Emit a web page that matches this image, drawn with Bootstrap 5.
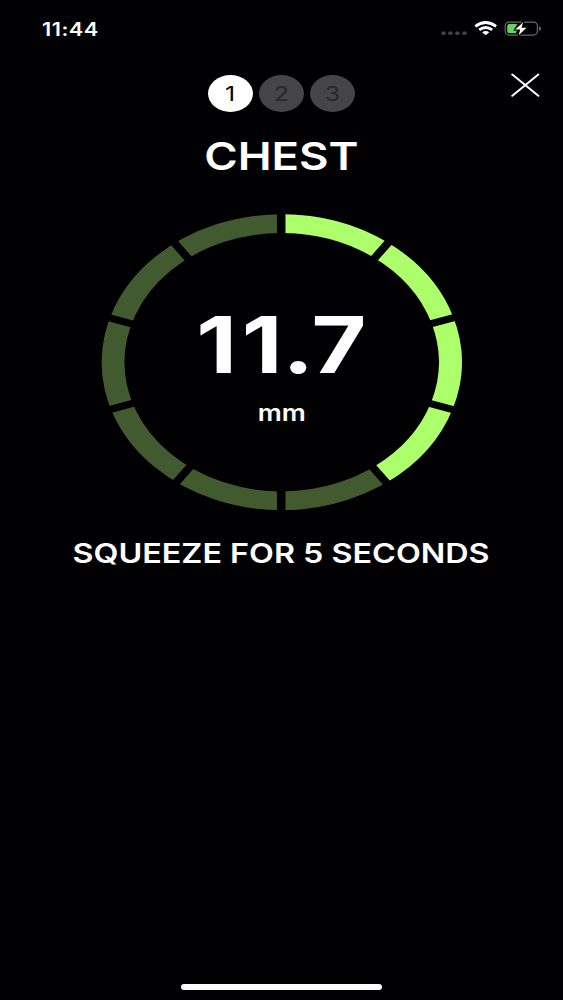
<!DOCTYPE html>
<html lang="en">
<head>
<meta charset="utf-8">
<meta name="viewport" content="width=device-width, initial-scale=1">
<title>Chest measurement</title>
<link href="https://cdn.jsdelivr.net/npm/bootstrap@5.3.0/dist/css/bootstrap.min.css" rel="stylesheet">
<style>
  html, body { height: 100%; }
  body { background: #010002; color: #fff; font-family: Inter, "Liberation Sans", sans-serif; }
  .screen { height: 1000px; width: 563px; overflow: hidden; }
  .wide { display: inline-block; transform: scaleX(1.21); white-space: nowrap; line-height: 1; }
  .statusbar { height: 57px; padding: 0 21px 0 42px; }
  .statusbar svg { margin-bottom: 2px; }
  .clock { font-size: 18px; font-weight: 600; letter-spacing: .4px; padding-top: 2px; transform-origin: left center; }
  .topbar { height: 75px; padding-top: 18px; }
  .step { width: 45px; height: 37px; border-radius: 50%; background: #454446; color: #29282a; font-size: 20.5px; padding-top: 2px; }
  .step.current { background: #fff; color: #000; }
  .steps { gap: 6px; }
  .btn-x { top: 73px; right: 23px; width: 29px; height: 24px; }
  .title { font-size: 38.5px; font-weight: 600; height: 48px; padding-top: 1px; }
  .title .wide { transform: scaleX(1.18); }
  .gauge { width: 362px; height: 300px; margin-top: 33px; }
  .gauge-text { padding-top: 93px; }
  .reading { font-size: 78px; font-weight: 700; height: 78px; }
  .reading .first { letter-spacing: 4px; }
  .unit { font-size: 23px; font-weight: 600; margin-top: 18px; }
  .unit.wide { transform: scaleX(1.16); }
  .prompt { font-size: 26.8px; font-weight: 600; margin-top: 20px; }
  .prompt .wide { transform: scaleX(1.205); }
  .home-bar { width: 201px; height: 6px; margin-bottom: 10px; }
</style>
</head>
<body>
<main class="screen d-flex flex-column align-items-center position-relative">
  <header class="statusbar w-100 d-flex justify-content-between align-items-center flex-shrink-0">
    <span class="wide clock">11:44</span>
    <svg width="104" height="20" viewBox="438 18 104 20" aria-hidden="true">
      <g fill="#434245"><ellipse cx="443.5" cy="33.2" rx="2.3" ry="1.9"/><ellipse cx="450.4" cy="33.2" rx="2.3" ry="1.9"/><ellipse cx="457.4" cy="33.2" rx="2.3" ry="1.9"/><ellipse cx="464.5" cy="33.2" rx="2.3" ry="1.9"/></g>
      <g fill="none" stroke="#fff" stroke-width="2.8">
        <path d="M475.3 26.3Q485.7 18.7 496.1 26.3"/>
        <path d="M479.2 29.9Q485.7 25 492.2 29.9"/>
      </g>
      <path fill="#fff" d="M482.1 32.3Q485.7 29.8 489.3 32.3L485.7 35.2Z"/>
      <rect x="505.2" y="22.1" width="32.2" height="13" rx="4" fill="none" stroke="#69686b" stroke-width="1.2"/>
      <path fill="#69686b" d="M539 26.2q2.2 .9 2.2 2.4t-2.2 2.4z"/>
      <path fill="#66d25f" d="M509.5 24H517.5L514 29.5H517L516 33.2H509.5Q507.2 33.2 507.2 31.2V26Q507.2 24 509.5 24Z"/>
      <path fill="#fff" stroke="#010002" stroke-width="1.6" paint-order="stroke" d="M523.2 22.2L515.2 29.6H520.2L518.7 35.3L526.5 27.7H521.5Z"/>
    </svg>
  </header>

  <nav class="topbar w-100 d-flex justify-content-center flex-shrink-0" aria-label="Steps">
    <div class="steps d-flex">
      <span class="step current d-flex align-items-center justify-content-center"><span class="wide">1</span></span>
      <span class="step d-flex align-items-center justify-content-center"><span class="wide">2</span></span>
      <span class="step d-flex align-items-center justify-content-center"><span class="wide">3</span></span>
    </div>
  </nav>
  <button type="button" class="btn-x btn p-0 border-0 position-absolute d-flex" aria-label="Close">
    <svg width="29" height="24" viewBox="0 0 29 24"><path d="M1.3 1.5L27.3 22.8M27.3 1.5L1.3 22.8" fill="none" stroke="#fff" stroke-width="2" stroke-linecap="round"/></svg>
  </button>

  <h1 class="title m-0 d-flex align-items-center flex-shrink-0"><span class="wide">CHEST</span></h1>

  <section class="gauge position-relative flex-shrink-0">
    <svg class="d-block" width="362" height="300" viewBox="-181 -150 362 300" aria-hidden="true">
      <g transform="translate(-.3 -.8) scale(1.217 1)" fill="none">
        <circle r="138.6" stroke="#425a2f" stroke-width="18.8"/>
        <path d="M0 -138.6A138.6 138.6 0 0 1 81.47 112.13" stroke="#acff6b" stroke-width="18.8"/>
        <path transform="translate(-.4 1.5)" stroke="#010002" stroke-width="7" d="M0 -155V150M88.17 -121.35L-88.17 121.35M142.66 -46.35L-142.66 46.35M142.66 46.35L-142.66 -46.35M88.17 121.35L-88.17 -121.35"/>
      </g>
    </svg>
    <div class="gauge-text position-absolute top-0 start-0 w-100 h-100 d-flex flex-column align-items-center">
      <span class="wide reading"><span class="first">1</span>1.7</span>
      <span class="wide unit">mm</span>
    </div>
  </section>

  <p class="prompt mb-0"><span class="wide">SQUEEZE FOR 5 SECONDS</span></p>

  <div class="home-bar bg-white rounded-pill mt-auto flex-shrink-0"></div>
</main>
<script src="https://cdn.jsdelivr.net/npm/bootstrap@5.3.0/dist/js/bootstrap.bundle.min.js"></script>
</body>
</html>
